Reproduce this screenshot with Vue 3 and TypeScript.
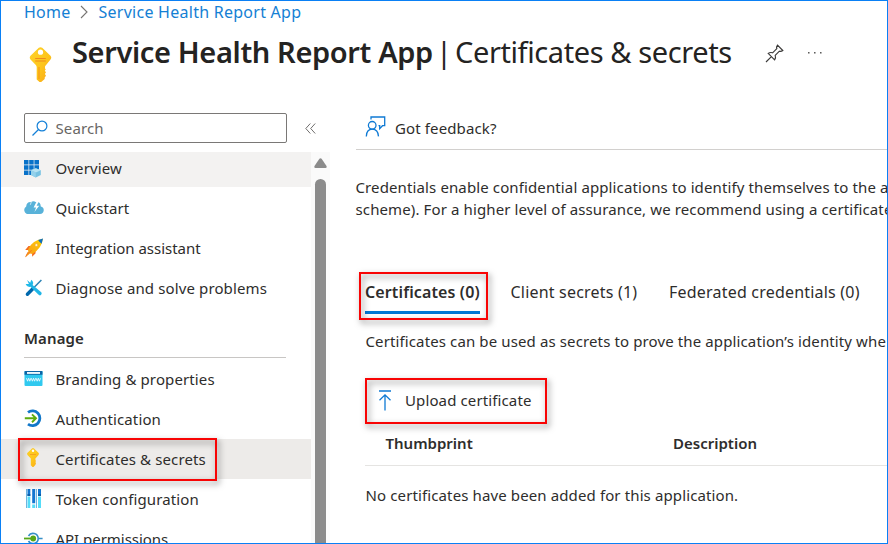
<script setup lang="ts">
interface NavItem {
  icon: string
  label: string
  state?: string
}

const topItems: NavItem[] = [
  { icon: 'overview', label: 'Overview', state: 'hovered' },
  { icon: 'quickstart', label: 'Quickstart' },
  { icon: 'rocket', label: 'Integration assistant', state: 'tight' },
  { icon: 'tools', label: 'Diagnose and solve problems' },
]

const manageItems: NavItem[] = [
  { icon: 'branding', label: 'Branding & properties' },
  { icon: 'auth', label: 'Authentication' },
  { icon: 'key', label: 'Certificates & secrets', state: 'selected' },
  { icon: 'token', label: 'Token configuration' },
  { icon: 'api', label: 'API permissions', state: 'tight' },
]

const groups = [
  { title: '', items: topItems },
  { title: 'Manage', items: manageItems },
]

const tabs = ['Certificates (0)', 'Client secrets (1)', 'Federated credentials (0)']
</script>

<template>
  <div class="portal">
    <svg class="defs" width="0" height="0" aria-hidden="true">
      <defs>
        <linearGradient id="gold" x1="0" y1="0" x2="1" y2="1">
          <stop offset="0" stop-color="#ffd32a" /><stop offset=".55" stop-color="#fdc51b" /><stop offset="1" stop-color="#f9a51a" />
        </linearGradient>
        <linearGradient id="cyan" x1="0" y1="1" x2="1" y2="0">
          <stop offset="0" stop-color="#32d0f0" /><stop offset=".5" stop-color="#1fb4e6" /><stop offset="1" stop-color="#32d0f0" />
        </linearGradient>
        <linearGradient id="fire" x1="1" y1="0" x2="0" y2="1">
          <stop offset="0" stop-color="#ffd400" /><stop offset="1" stop-color="#f7901e" />
        </linearGradient>
        <symbol id="key" viewBox="0 0 22 35">
          <path d="M9.3.8Q11 -.5 12.7.8L21 8.7Q22.5 10.5 21 12.5L16.4 18.2Q15.5 19 15.5 20V21.5L16.3 22.3 15.3 23.8 16.5 25.3 15.4 27 16.5 28.7 15.2 30.5V32L11.7 35H10L7.2 32.5V20Q7.1 18.8 6.3 18L1 12.5Q-.5 10.5 1 8.7Z" fill="url(#gold)" />
          <circle cx="11" cy="5.2" r="2.6" fill="#fff" />
          <path d="M5.7 11.5H16.3M5.7 14H16.3" stroke="#f08a1c" stroke-width="1.1" />
          <path d="M9.5 20V32" stroke="#f79c1a" stroke-width="1.2" />
        </symbol>
        <symbol id="key-small" viewBox="0 0 12 19">
          <path d="M5 .5Q6 -.3 7 .5L11.5 4.7Q12.3 5.8 11.5 6.9L8.4 10.5V12L9 13 8.4 14 9 15.2 8.3 17L6.5 19H5.5L3.8 17.3V10.5L.5 6.9Q-.3 5.8.5 4.7Z" fill="url(#gold)" />
          <circle cx="6" cy="2.8" r="1.2" fill="#fff" />
          <path d="M3 6.5H9" stroke="#f6a31c" stroke-width="1" />
        </symbol>
      </defs>
    </svg>

    <header class="header">
      <nav class="breadcrumb">
        <a class="home">Home</a>
        <svg class="crumb-arrow" viewBox="0 0 8 14"><path d="M1 1L7 7 1 13" fill="none" stroke="#767472" stroke-width="1.1" /></svg>
        <a>Service Health Report App</a>
      </nav>
      <div class="title-row">
        <svg class="title-key"><use href="#key" /></svg>
        <h1><b>Service Health Report App</b><i>|</i><span>Certificates &amp; secrets</span></h1>
        <svg class="pin" viewBox="0 0 19 19" fill="none" stroke="#3b3a39" stroke-width="1.15">
          <path d="M1 18L6.4 12.6M3.2 9.4Q5.3 7.9 7.6 8.8L11.8 4.6Q11.1 3 12.5 1.2L17.8 6.5Q16 7.9 14.4 7.2L10.2 11.4Q11.1 13.7 9.6 15.8Z" />
        </svg>
        <svg class="more" viewBox="0 0 14 2" fill="#4a4948"><rect width="1.6" height="1.6" rx=".6" /><rect x="6" width="1.6" height="1.6" rx=".6" /><rect x="12" width="1.6" height="1.6" rx=".6" /></svg>
      </div>
    </header>

    <div class="body">
      <aside class="sidebar">
        <div class="search-row">
          <div class="search">
            <svg viewBox="0 0 16 16" fill="none" stroke="#1480d8" stroke-width="1.2"><circle cx="10" cy="6" r="4.9" /><path d="M6.5 9.5L.5 15.5" /></svg>
            <span>Search</span>
          </div>
          <svg class="collapse" viewBox="0 0 11 11" fill="none" stroke="#605e5c" stroke-width=".9"><path d="M5.3.5L.8 5.5 5.3 10.5M10.2.5L5.7 5.5 10.2 10.5" /></svg>
        </div>
        <div class="scroll-area">
          <div class="menu">
            <section v-for="group in groups" :key="group.title" class="group">
              <h2 v-if="group.title">{{ group.title }}</h2>
              <div v-for="item in group.items" :key="item.label" class="item" :class="item.state">
                <svg v-if="item.icon === 'overview'" class="icon" viewBox="0 0 20 20">
                  <path d="M1 1H5.5V5.5H1ZM6.2 1H10.7V5.5H6.2ZM11.4 1H16V5.5H11.4ZM1 6.2H5.5V10.7H1ZM6.2 6.2H10.7V10.7H6.2ZM11.4 6.2H16V10.7H11.4ZM1 11.4H5.5V16H1ZM6.2 11.4H10.7V16H6.2Z" fill="#0872c9" />
                  <path d="M8 11.3L12.8 9.2 17.8 11.3V16L12.8 18.5 8 16Z" fill="#78c2e2" /><path d="M8 11.3L12.8 9.2 17.8 11.3 12.8 13.5Z" fill="#b7e3f3" /><path d="M8 11.3L12.8 13.5V18.5L8 16Z" fill="#94d1eb" />
                </svg>
                <svg v-else-if="item.icon === 'quickstart'" class="icon" viewBox="0 0 20 20">
                  <path d="M4.5 16A4 4 0 0 1 2.2 8.6Q2.5 3.7 7 4Q9.5 2.5 12 4.2Q16.5 3.5 16.8 8.5A3.8 3.8 0 0 1 16 16Z" fill="#58b2d9" />
                  <path d="M12.6 3.4L9.6 9.5H12.1L10.4 14 15.2 7.7H12.6L14.6 3.8Z" fill="#fff" /><path d="M7.4 3.7L6.3 6.8" stroke="#fff" stroke-width=".7" />
                </svg>
                <svg v-else-if="item.icon === 'rocket'" class="icon" viewBox="0 0 20 20">
                  <path d="M7.4 8.1H4.5L1.2 12 5 12.1ZM11.5 12.4L11.6 15.2 8.2 18.7 8 14.8Z" fill="#f46c20" />
                  <path d="M4 11.5Q8 2.3 18.9.8Q18.1 10.1 8.4 15.9L6 15.6 1 19.4 4.3 13.7Z" fill="url(#fire)" />
                  <path d="M14.1 2.1L19 .6 17.6 5.7Q15.5 4.4 14.1 2.1Z" fill="#0f6fbd" /><circle cx="12.4" cy="7.1" r="1.5" fill="#fff4cf" stroke="#efa31b" stroke-width=".6" /><path d="M4.2 15.6L7.6 12.2M1.8 18.6L4 14.2" stroke="#f27a20" stroke-width="1" />
                </svg>
                <svg v-else-if="item.icon === 'tools'" class="icon" viewBox="0 0 20 20">
                  <path d="M9 10.5L17.4 2" stroke="#2a82b4" stroke-width="1.5" /><path d="M3.4 16.2L8.8 10.7" stroke="#0068ad" stroke-width="3.4" stroke-linecap="round" />
                  <path d="M3.1 2.1L6.2 4.8 7.3 1.7Q10.3 4 8.6 7L17.3 14.2Q18.3 15.6 17 16.9Q15.6 18 14.3 16.6L6.5 8.8Q3 9.6 1.6 6L4.9 6Z" fill="url(#cyan)" />
                </svg>
                <svg v-else-if="item.icon === 'branding'" class="icon" viewBox="0 0 20 20">
                  <path d="M.5 2H18.5V16Q18.5 17 17.5 17H1.5Q.5 17 .5 16Z" fill="#30c9ef" /><path d="M.5 3Q.5 2 1.5 2H17.5Q18.5 2 18.5 3V5.8H.5Z" fill="#0b64a5" /><rect x="3" y="3" width="13" height="1.9" fill="#edf8fd" />
                  <path d="M2.5 9.2L3.6 12.2 4.7 9.2 5.8 12.2 6.9 9.2M7.3 9.2L8.4 12.2 9.5 9.2 10.6 12.2 11.7 9.2M12.1 9.2L13.2 12.2 14.3 9.2 15.4 12.2 16.5 9.2" fill="none" stroke="#e9fbff" stroke-width=".9" />
                </svg>
                <svg v-else-if="item.icon === 'auth'" class="icon" viewBox="0 0 20 20" fill="none">
                  <path d="M4 3.4A7.4 7.4 0 1 1 4 15.2" stroke="#1177c9" stroke-width="2.8" /><path d="M.8 9.3H11.5M8 5.4L12 9.3 8 13.2" stroke="#5dac0d" stroke-width="1.9" />
                </svg>
                <svg v-else-if="item.icon === 'key'" class="icon key-icon"><use href="#key-small" /></svg>
                <svg v-else-if="item.icon === 'token'" class="icon" viewBox="0 0 20 20">
                  <path d="M3.5 0H6.3V7H3.5ZM8.2 0H11.2V14.2H8.2ZM14 0H17V7H14Z" fill="#1276d1" /><path d="M3.5 7.5H6.3V19H3.5ZM8.2 15.5H11.2V19H8.2ZM14 7.5H17V19H14Z" fill="#55dcf8" />
                  <path d="M2 0H3V19H2ZM12 0H13V19H12Z" fill="#6fb4df" /><path d="M3.5 5H6.3V7H3.5ZM14 5H17V7H14Z" fill="#0a5eaa" />
                </svg>
                <svg v-else class="icon" viewBox="0 0 20 20" fill="none">
                  <path d="M4.5 7A5.2 5.2 0 0 1 14.2 9.5 5.2 5.2 0 0 1 4.5 12M14 9.5H18.6" stroke="#368fc7" stroke-width="1.6" /><path d="M0 9.5H8" stroke="#57a717" stroke-width="1.8" /><circle cx="9.2" cy="9.5" r="2.9" fill="#57a717" />
                </svg>
                <span>{{ item.label }}</span>
              </div>
            </section>
          </div>
          <div class="scrollbar">
            <svg viewBox="0 0 13 10"><path d="M5.4.8Q6.5-.4 7.6.8L12.5 8Q13.2 9.8 11.5 10H1.5Q-.2 9.8.5 8Z" fill="#8b8b8b" /></svg>
            <div class="thumb"></div>
          </div>
        </div>
      </aside>

      <main class="content">
        <div class="command">
          <svg viewBox="0 0 20 21" fill="none" stroke="#0f7ad4" stroke-width="1.3"><path d="M5.5 3.5V1H19.2V9.7H17L14.2 12.6V9.7H13" /><circle cx="6.7" cy="9.3" r="3.8" /><path d="M.8 20.4Q1 13.2 6.8 13.2Q12.5 13.2 13 20.4" /></svg>
          <span>Got feedback?</span>
        </div>
        <p class="intro">
          Credentials enable confidential applications to identify themselves to the a<br />
          scheme). For a higher level of assurance, we recommend using a certificate
        </p>
        <div class="tabs">
          <div v-for="(tab, i) in tabs" :key="tab" class="tab" :class="{ active: i === 0 }">{{ tab }}</div>
        </div>
        <p class="hint">Certificates can be used as secrets to prove the application’s identity whe</p>
        <div class="upload">
          <svg viewBox="0 0 14 21" fill="none" stroke="#0f7ad4" stroke-width="1.3"><path d="M1 1H13M7 20.5V5M1.5 10.3L7 4.8 12.5 10.3" /></svg>
          <span>Upload certificate</span>
        </div>
        <div class="table-head"><span>Thumbprint</span><span>Description</span></div>
        <p class="empty">No certificates have been added for this application.</p>
      </main>
    </div>
  </div>
</template>

<style>
body { background: #fff; }
</style>

<style scoped>
*, *::after { box-sizing: border-box; }
.portal { position: relative; width: 888px; height: 544px; overflow: hidden; display: flex; flex-direction: column; background: #fff; color: #2e2d2c; font: 15px/22px "Noto Sans", "Open Sans", sans-serif; letter-spacing: .12px; white-space: nowrap; }
.portal::after { content: ""; position: absolute; inset: 0; border: 1px solid #0a80f5; pointer-events: none; }
.defs { position: absolute; }
svg { display: block; flex: none; }
h1, h2, p { margin: 0; }
.header { height: 113px; flex: none; }
.breadcrumb { display: flex; align-items: center; height: 24px; padding-left: 24px; font-size: 16px; letter-spacing: .26px; color: #1480d4; }
.home { width: 56px; }
.crumb-arrow { width: 8px; height: 14px; margin-right: 10.5px; }
.title-row { display: flex; align-items: center; height: 58px; padding-left: 29px; }
.title-key { width: 23px; height: 35px; margin: 22px 20px 0 0; }
h1 { display: flex; width: 693px; margin-top: -2px; font-size: 29px; line-height: 40px; font-weight: 400; color: #242322; }
h1 b { width: 364px; font-weight: 600; letter-spacing: -.36px; }
h1 i { width: 19px; font-style: normal; }
h1 span { letter-spacing: -.4px; }
.pin { width: 19px; height: 19px; }
.more { width: 14px; height: 2px; margin-left: 24px; }
.body { display: flex; flex: 1; min-height: 0; }
.sidebar { width: 330px; flex: none; display: flex; flex-direction: column; }
.search-row { display: flex; align-items: center; height: 30px; padding-left: 24px; margin-bottom: 9px; flex: none; }
.search { display: flex; align-items: center; width: 263px; height: 30px; padding-left: 7px; border: 1px solid #7a7876; border-radius: 2px; color: #686664; }
.search svg { width: 16px; height: 16px; margin-right: 7.5px; }
.collapse { width: 11px; height: 11px; margin-left: 18px; }
.scroll-area { display: flex; flex: 1; min-height: 0; overflow: hidden; }
.menu { width: 311px; }
.group { padding-bottom: 12px; }
.item { position: relative; display: flex; align-items: center; height: 40px; padding-left: 24px; }
.item .icon { width: 20px; height: 20px; margin-right: 11.5px; }
.item .key-icon { width: 12px; height: 19px; margin: 0 16.5px 3px 3px; }
.hovered { height: 35px; margin-bottom: 1px; background: #f3f2f1; }
.item.hovered .icon { margin: -2px 12.5px 0 -1px; }
.hovered span { margin-top: -3px; }
.tight { letter-spacing: -.03px; }
.selected { background: #edebe9; }
h2 { width: 262px; height: 38px; margin: 0 0 1px 24px; border-bottom: 1px solid #c8c6c4; font-size: 15px; line-height: 36px; font-weight: 600; }
.scrollbar { display: flex; flex-direction: column; align-items: center; width: 19px; padding-top: 6px; background: #fafafa; }
.scrollbar svg { width: 13px; height: 10px; }
.thumb { width: 11px; height: 380px; flex: none; margin-top: 11px; border-radius: 6px; background: #8b8b8b; }
.content { width: 558px; padding-left: 25.5px; overflow: hidden; }
.command { display: flex; align-items: center; height: 37px; padding: 0 0 6px 9px; border-bottom: 1px solid #d2d0ce; }
.command svg { width: 21px; height: 21px; margin: -3px 9.5px 0 0; }
.intro { padding-top: 26px; }
.tabs { display: flex; margin: 52px 0 0 9.5px; height: 42px; font-size: 16px; line-height: 41px; gap: 31px; letter-spacing: .2px; }
.tab { position: relative; height: 42px; }
.active { width: 115px; border-bottom: 3px solid #0078d4; font-weight: 600; letter-spacing: .12px; margin-right: -.5px; }
.tab:last-child { margin-left: .7px; }
.active::after, .upload::after, .selected::after { content: ""; position: absolute; border: 2px solid #f80404; filter: drop-shadow(2px 3px 3px rgba(0, 0, 0, .5)); }
.active::after { inset: 0 -8px -9px -6px; }
.selected::after { left: 18px; top: -1px; width: 199px; height: 43px; z-index: 1; }
.hint { margin: 16px 0 0 10px; }
.upload { position: relative; display: flex; align-items: center; width: 182px; height: 46px; margin: 26px 0 0 9.5px; padding: 0 0 2px 13px; }
.upload::after { inset: 0; }
.upload svg { width: 14px; height: 21px; margin-right: 13px; }
.table-head { display: flex; height: 42px; margin-left: 9.5px; padding-left: 20.5px; border-bottom: 1px solid #e5e4e2; line-height: 38px; font-weight: 600; letter-spacing: 0; }
.table-head span { width: 287.5px; flex: none; }
.empty { margin: 18px 0 0 10px; }
</style>
